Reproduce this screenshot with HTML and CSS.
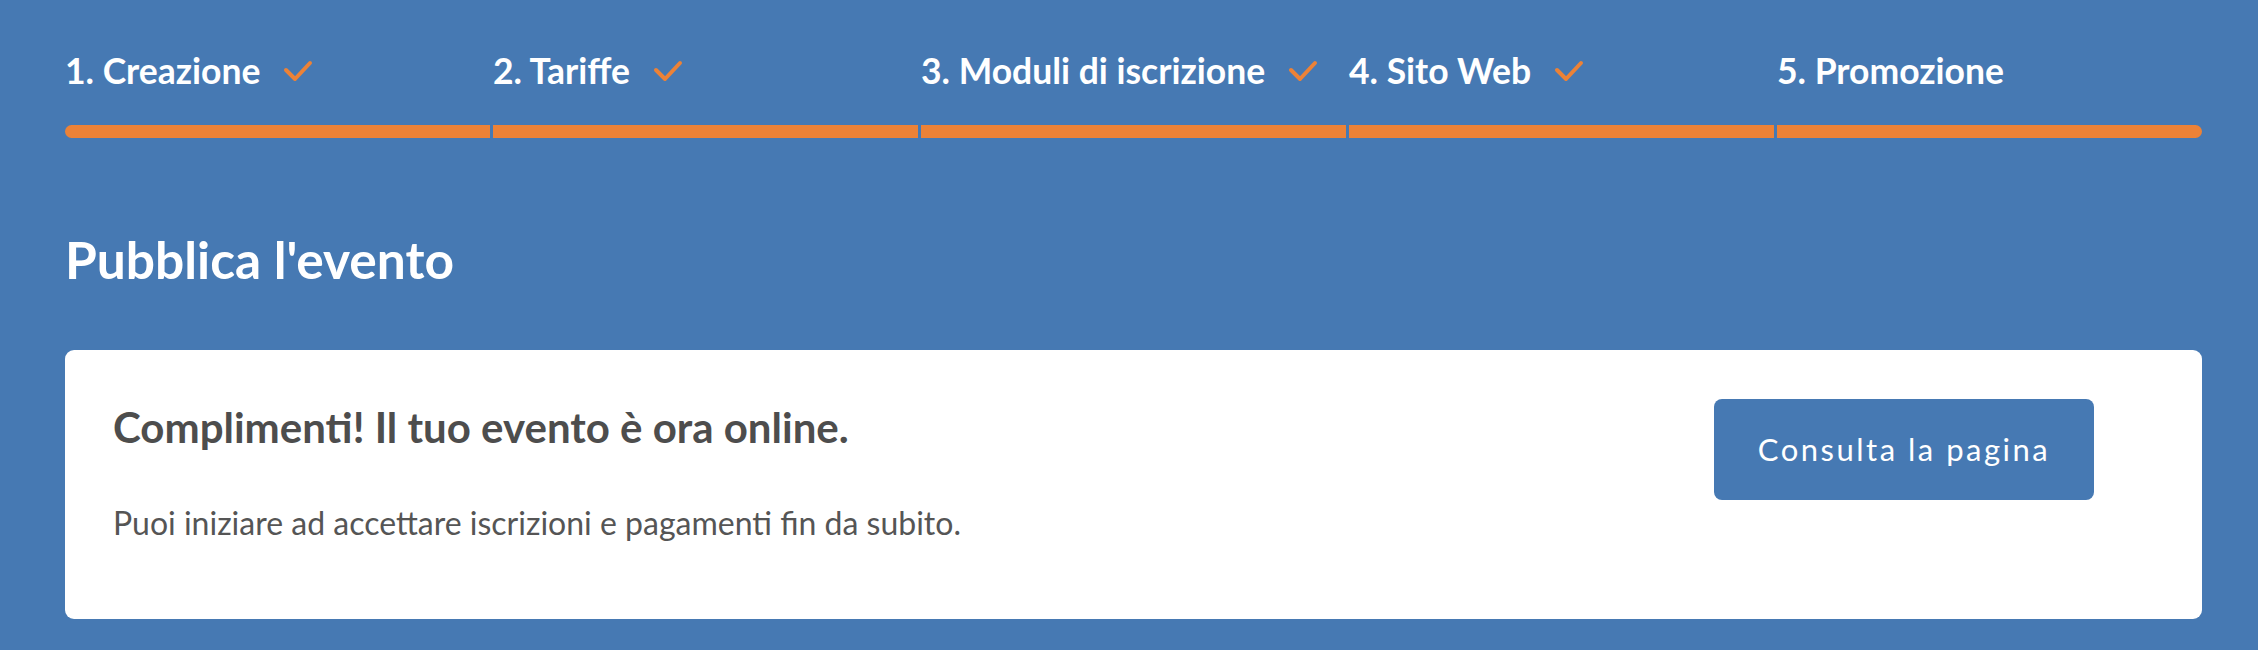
FILE: index.html
```html
<!DOCTYPE html>
<html lang="it">
<head>
  <meta charset="UTF-8" />
  <meta name="viewport" content="width=device-width, initial-scale=1.0"/>
  <title>Pubblica l'evento</title>
  <link rel="stylesheet" href="styles.css">
</head>
<body>
  <div class="page">
    <ol class="steps">
      <li class="step done">
        <span class="step-label">1. Creazione
          <svg class="check" viewBox="0 0 32 24"><polyline points="4,11 13,20 28,4"/></svg>
        </span>
        <span class="step-bar"></span>
      </li>
      <li class="step done">
        <span class="step-label">2. Tariffe
          <svg class="check" viewBox="0 0 32 24"><polyline points="4,11 13,20 28,4"/></svg>
        </span>
        <span class="step-bar"></span>
      </li>
      <li class="step done">
        <span class="step-label">3. Moduli di iscrizione
          <svg class="check" viewBox="0 0 32 24"><polyline points="4,11 13,20 28,4"/></svg>
        </span>
        <span class="step-bar"></span>
      </li>
      <li class="step done">
        <span class="step-label">4. Sito Web
          <svg class="check" viewBox="0 0 32 24"><polyline points="4,11 13,20 28,4"/></svg>
        </span>
        <span class="step-bar"></span>
      </li>
      <li class="step">
        <span class="step-label">5. Promozione</span>
        <span class="step-bar"></span>
      </li>
    </ol>

    <h1 class="page-title">Pubblica l'evento</h1>

    <div class="card">
      <div class="card-text">
        <h2>Complimenti! Il tuo evento è ora online.</h2>
        <p>Puoi iniziare ad accettare iscrizioni e pagamenti fin da subito.</p>
      </div>
      <a class="btn" href="#">Consulta la pagina</a>
    </div>
  </div>
</body>
</html>
```
FILE: styles.css
```css
body {
  font-family: Lato, "Open Sans", sans-serif;
  margin: 0;
  padding: 0;
  background: #4679b3;
}
.page {
  padding: 0 56px 0 65px;
}
.steps {
  list-style: none;
  margin: 0;
  padding: 49px 0 0;
  display: grid;
  grid-template-columns: repeat(5, 1fr);
  column-gap: 3px;
}
.step {
  display: flex;
  flex-direction: column;
}
.step-label {
  display: flex;
  align-items: center;
  gap: 22px;
  color: white;
  font-size: 35.5px;
  font-weight: 700;
  line-height: 44px;
  white-space: nowrap;
}
.check {
  width: 32px;
  height: 24px;
  fill: none;
  stroke: #ec8237;
  stroke-width: 4;
  stroke-linecap: round;
  stroke-linejoin: round;
}
.step-bar {
  display: block;
  height: 13px;
  margin-top: 32px;
  background: #ec8237;
}
.step:first-child .step-bar {
  border-radius: 7px 0 0 7px;
}
.step:last-child .step-bar {
  border-radius: 0 7px 7px 0;
}
.page-title {
  margin: 91px 0 0;
  color: white;
  font-size: 51.5px;
  font-weight: 700;
  line-height: 60px;
}
.card {
  display: flex;
  justify-content: space-between;
  align-items: flex-start;
  margin-top: 61px;
  padding: 49px 108px 0 48px;
  height: 220px;
  background: white;
  border-radius: 9px;
}
.card h2 {
  margin: 0;
  color: #4d4d4d;
  font-size: 42px;
  font-weight: 700;
  line-height: 56px;
}
.card p {
  margin: 48px 0 0;
  color: #555;
  font-size: 32px;
  line-height: 40px;
}
.btn {
  display: block;
  width: 380px;
  height: 101px;
  line-height: 101px;
  text-align: center;
  background: #4679b3;
  color: white;
  text-decoration: none;
  font-size: 31px;
  letter-spacing: 2.5px;
  border-radius: 8px;
}
```
